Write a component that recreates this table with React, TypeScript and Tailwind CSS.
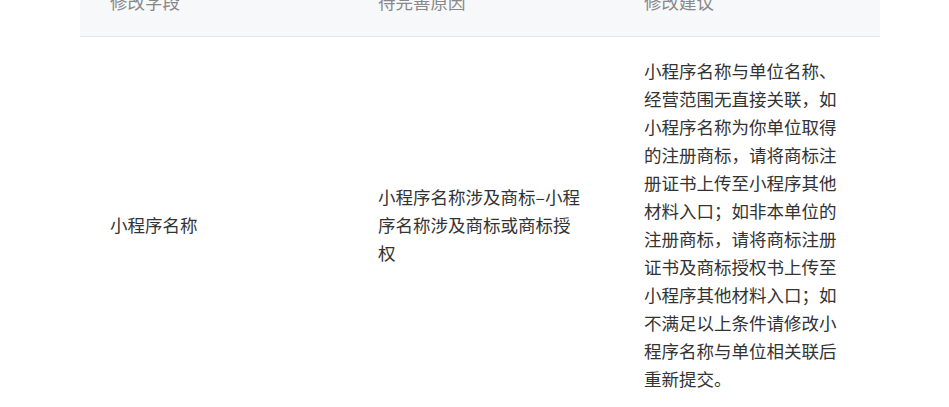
export default function App() {
  const rows = [
    {
      field: '小程序名称',
      reason: '小程序名称涉及商标–小程序名称涉及商标或商标授权',
      advice:
        '小程序名称与单位名称、经营范围无直接关联，如小程序名称为你单位取得的注册商标，请将商标注册证书上传至小程序其他材料入口；如非本单位的注册商标，请将商标注册证书及商标授权书上传至小程序其他材料入口；如不满足以上条件请修改小程序名称与单位相关联后重新提交。',
    },
  ]

  return (
    <div
      className="min-h-screen bg-white overflow-hidden"
      style={{ fontFamily: '"Noto Sans CJK SC", "Noto Sans", sans-serif' }}
    >
      <div className="ml-[80px] mt-[-32px] w-[800px]">
        <table className="w-full table-fixed border-collapse text-[17.5px] leading-[28px]">
          <colgroup>
            <col className="w-[268px]" />
            <col className="w-[266px]" />
            <col className="w-[266px]" />
          </colgroup>
          <thead>
            <tr className="bg-[#f7f8fa] border-b border-[#e5e6e9]">
              <th className="px-[30px] py-[20px] text-left font-normal text-[#888888]">修改字段</th>
              <th className="px-[30px] py-[20px] text-left font-normal text-[#888888]">待完善原因</th>
              <th className="px-[30px] py-[20px] text-left font-normal text-[#888888]">修改建议</th>
            </tr>
          </thead>
          <tbody>
            {rows.map((r) => (
              <tr key={r.field} className="border-b border-[#e5e6e9]">
                <td className="px-[30px] py-[20px] align-middle text-[#333333]">{r.field}</td>
                <td className="px-[30px] py-[20px] align-middle text-[#333333]">{r.reason}</td>
                <td className="px-[30px] py-[20px] align-middle text-[#333333]">{r.advice}</td>
              </tr>
            ))}
          </tbody>
        </table>
      </div>
    </div>
  )
}
